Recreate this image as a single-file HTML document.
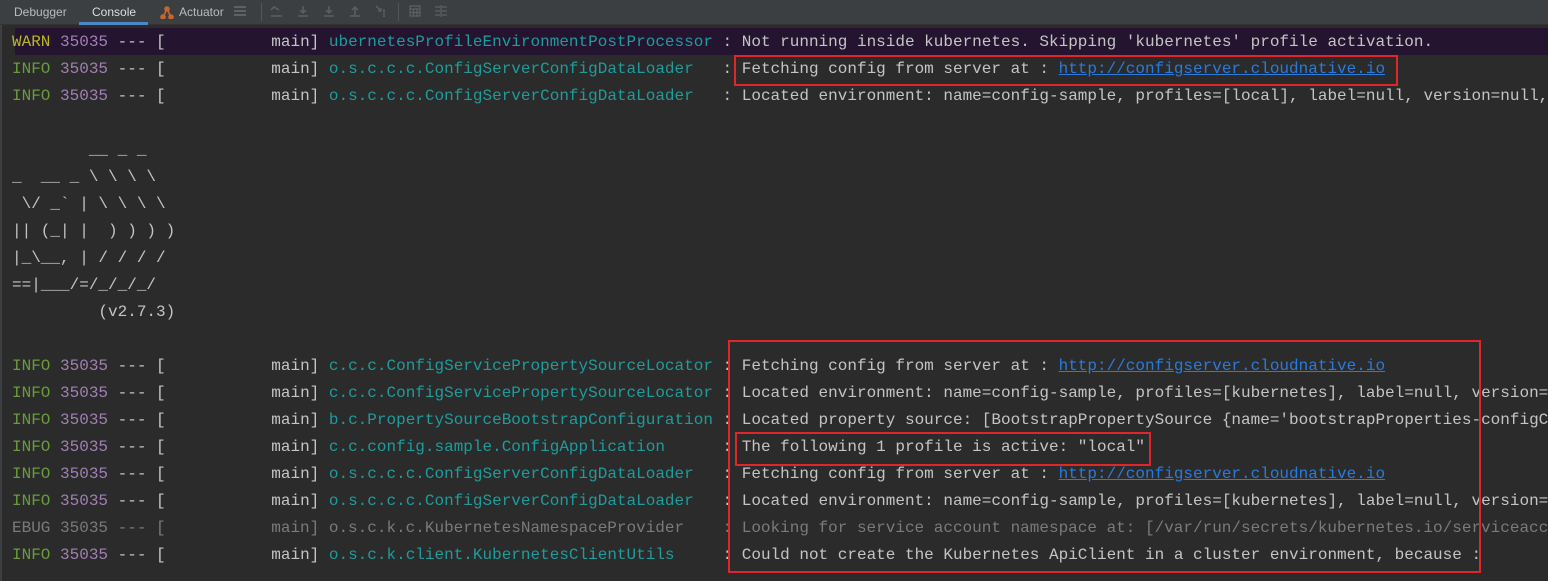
<!DOCTYPE html>
<html><head><meta charset="utf-8"><style>
body{margin:0;width:1548px;height:581px;background:#2b2b2b;overflow:hidden;position:relative;font-family:"Liberation Mono",monospace}
.tb{position:absolute;left:0;top:0;width:1548px;height:24px;background:#3c3f41;border-bottom:1px solid #323232;font-family:"Liberation Sans",sans-serif;font-size:12px;color:#bbbbbb}
.tb span{position:absolute;top:5px}
.ul{position:absolute;left:79px;top:22px;width:69px;height:3px;background:#4a88c7}
.sep{position:absolute;top:3px;width:1px;height:18px;background:#555}
.ic{position:absolute;top:5px;width:12px;height:12px}
.lb{position:absolute;left:0;top:25px;width:2px;height:556px;background:#3c3f41}
.con{position:absolute;left:12px;top:29px;width:1536px;height:552px;overflow:hidden;white-space:pre;font-size:16px;line-height:27px;color:#c4c4c4}
.warnbg{position:absolute;left:15px;top:28px;width:1533px;height:27px;background:#24142f}
.w{color:#bbb529}.i{color:#6a9b3b}.p{color:#a27fb5}.l{color:#1e9c9c}.a{color:#287bde;text-decoration:underline}.d{color:#7a7a7a}
.box{position:absolute;border:2px solid #e0262b}
</style></head><body>
<div class="tb">
<span style="left:14px">Debugger</span>
<span style="left:92px;color:#ddd">Console</span>
<svg class="ic" style="left:160px;top:5px;width:14px;height:14px" viewBox="0 0 14 14"><g stroke="#c8662f" stroke-width="1.6" fill="#c8662f"><line x1="3" y1="12" x2="7" y2="4"/><line x1="7" y1="4" x2="11" y2="12"/><circle cx="7" cy="4" r="2"/><circle cx="3" cy="12" r="2"/><circle cx="11" cy="12" r="2"/></g></svg>
<span style="left:179px">Actuator</span>
<svg class="ic" style="left:234px" viewBox="0 0 12 12"><path d="M0 2h12M0 6h12M0 10h12" stroke="#6b6e70" stroke-width="1.5"/></svg>
<div class="sep" style="left:261px"></div>
<svg class="ic" style="left:270px" viewBox="0 0 12 12"><path d="M1 5l3-3 5 3M1 11h11" stroke="#5d6062" stroke-width="1.5" fill="none"/></svg>
<svg class="ic" style="left:297px" viewBox="0 0 12 12"><path d="M6 1v7M3 5l3 3 3-3M1 11h10" stroke="#5d6062" stroke-width="1.5" fill="none"/></svg>
<svg class="ic" style="left:323px" viewBox="0 0 12 12"><path d="M6 1v7M3 5l3 3 3-3M1 11h10" stroke="#5d6062" stroke-width="1.5" fill="none"/></svg>
<svg class="ic" style="left:349px" viewBox="0 0 12 12"><path d="M6 10V3M3 5l3-3 3 3M1 11h10" stroke="#5d6062" stroke-width="1.5" fill="none"/></svg>
<svg class="ic" style="left:375px" viewBox="0 0 12 12"><path d="M1 1l5 5M3 6h3V3M9 5v7M8 5h2M8 12h2" stroke="#5d6062" stroke-width="1.3" fill="none"/></svg>
<div class="sep" style="left:398px"></div>
<svg class="ic" style="left:409px" viewBox="0 0 12 12"><path d="M1 1h10v10H1zM1 4h10M1 7.5h10M4.5 4v7M8 4v7" stroke="#5d6062" stroke-width="1.2" fill="none"/></svg>
<svg class="ic" style="left:435px" viewBox="0 0 12 12"><path d="M0 2h5M0 6h5M0 10h5M7 2h5M7 6h5M7 10h5M6 0v12" stroke="#5d6062" stroke-width="1.3" fill="none"/></svg>
<div class="ul"></div>
</div>
<div class="lb"></div>
<div class="warnbg"></div>
<div class="con"><span class="w">WARN</span> <span class="p">35035</span> --- [           main] <span class="l">ubernetesProfileEnvironmentPostProcessor</span> : Not running inside kubernetes. Skipping 'kubernetes' profile activation.
<span class="i">INFO</span> <span class="p">35035</span> --- [           main] <span class="l">o.s.c.c.c.ConfigServerConfigDataLoader  </span> : Fetching config from server at : <span class="a">http://configserver.cloudnative.io</span>
<span class="i">INFO</span> <span class="p">35035</span> --- [           main] <span class="l">o.s.c.c.c.ConfigServerConfigDataLoader  </span> : Located environment: name=config-sample, profiles=[local], label=null, version=null, state=null

        __ _ _
_  __ _ \ \ \ \
 \/ _` | \ \ \ \
|| (_| |  ) ) ) )
|_\__, | / / / /
==|___/=/_/_/_/
         (v2.7.3)

<span class="i">INFO</span> <span class="p">35035</span> --- [           main] <span class="l">c.c.c.ConfigServicePropertySourceLocator</span> : Fetching config from server at : <span class="a">http://configserver.cloudnative.io</span>
<span class="i">INFO</span> <span class="p">35035</span> --- [           main] <span class="l">c.c.c.ConfigServicePropertySourceLocator</span> : Located environment: name=config-sample, profiles=[kubernetes], label=null, version=null
<span class="i">INFO</span> <span class="p">35035</span> --- [           main] <span class="l">b.c.PropertySourceBootstrapConfiguration</span> : Located property source: [BootstrapPropertySource {name='bootstrapProperties-configClient'}]
<span class="i">INFO</span> <span class="p">35035</span> --- [           main] <span class="l">c.c.config.sample.ConfigApplication     </span> : The following 1 profile is active: "local"
<span class="i">INFO</span> <span class="p">35035</span> --- [           main] <span class="l">o.s.c.c.c.ConfigServerConfigDataLoader  </span> : Fetching config from server at : <span class="a">http://configserver.cloudnative.io</span>
<span class="i">INFO</span> <span class="p">35035</span> --- [           main] <span class="l">o.s.c.c.c.ConfigServerConfigDataLoader  </span> : Located environment: name=config-sample, profiles=[kubernetes], label=null, version=null
<span class="d">EBUG 35035 --- [           main] o.s.c.k.c.KubernetesNamespaceProvider    : Looking for service account namespace at: [/var/run/secrets/kubernetes.io/serviceaccount]</span>
<span class="i">INFO</span> <span class="p">35035</span> --- [           main] <span class="l">o.s.c.k.client.KubernetesClientUtils    </span> : Could not create the Kubernetes ApiClient in a cluster environment, because :
</div>
<div class="box" style="left:734px;top:55px;width:660px;height:27px"></div>
<div class="box" style="left:728px;top:340px;width:749px;height:229px"></div>
<div class="box" style="left:735px;top:432px;width:412px;height:30px"></div>
</body></html>
